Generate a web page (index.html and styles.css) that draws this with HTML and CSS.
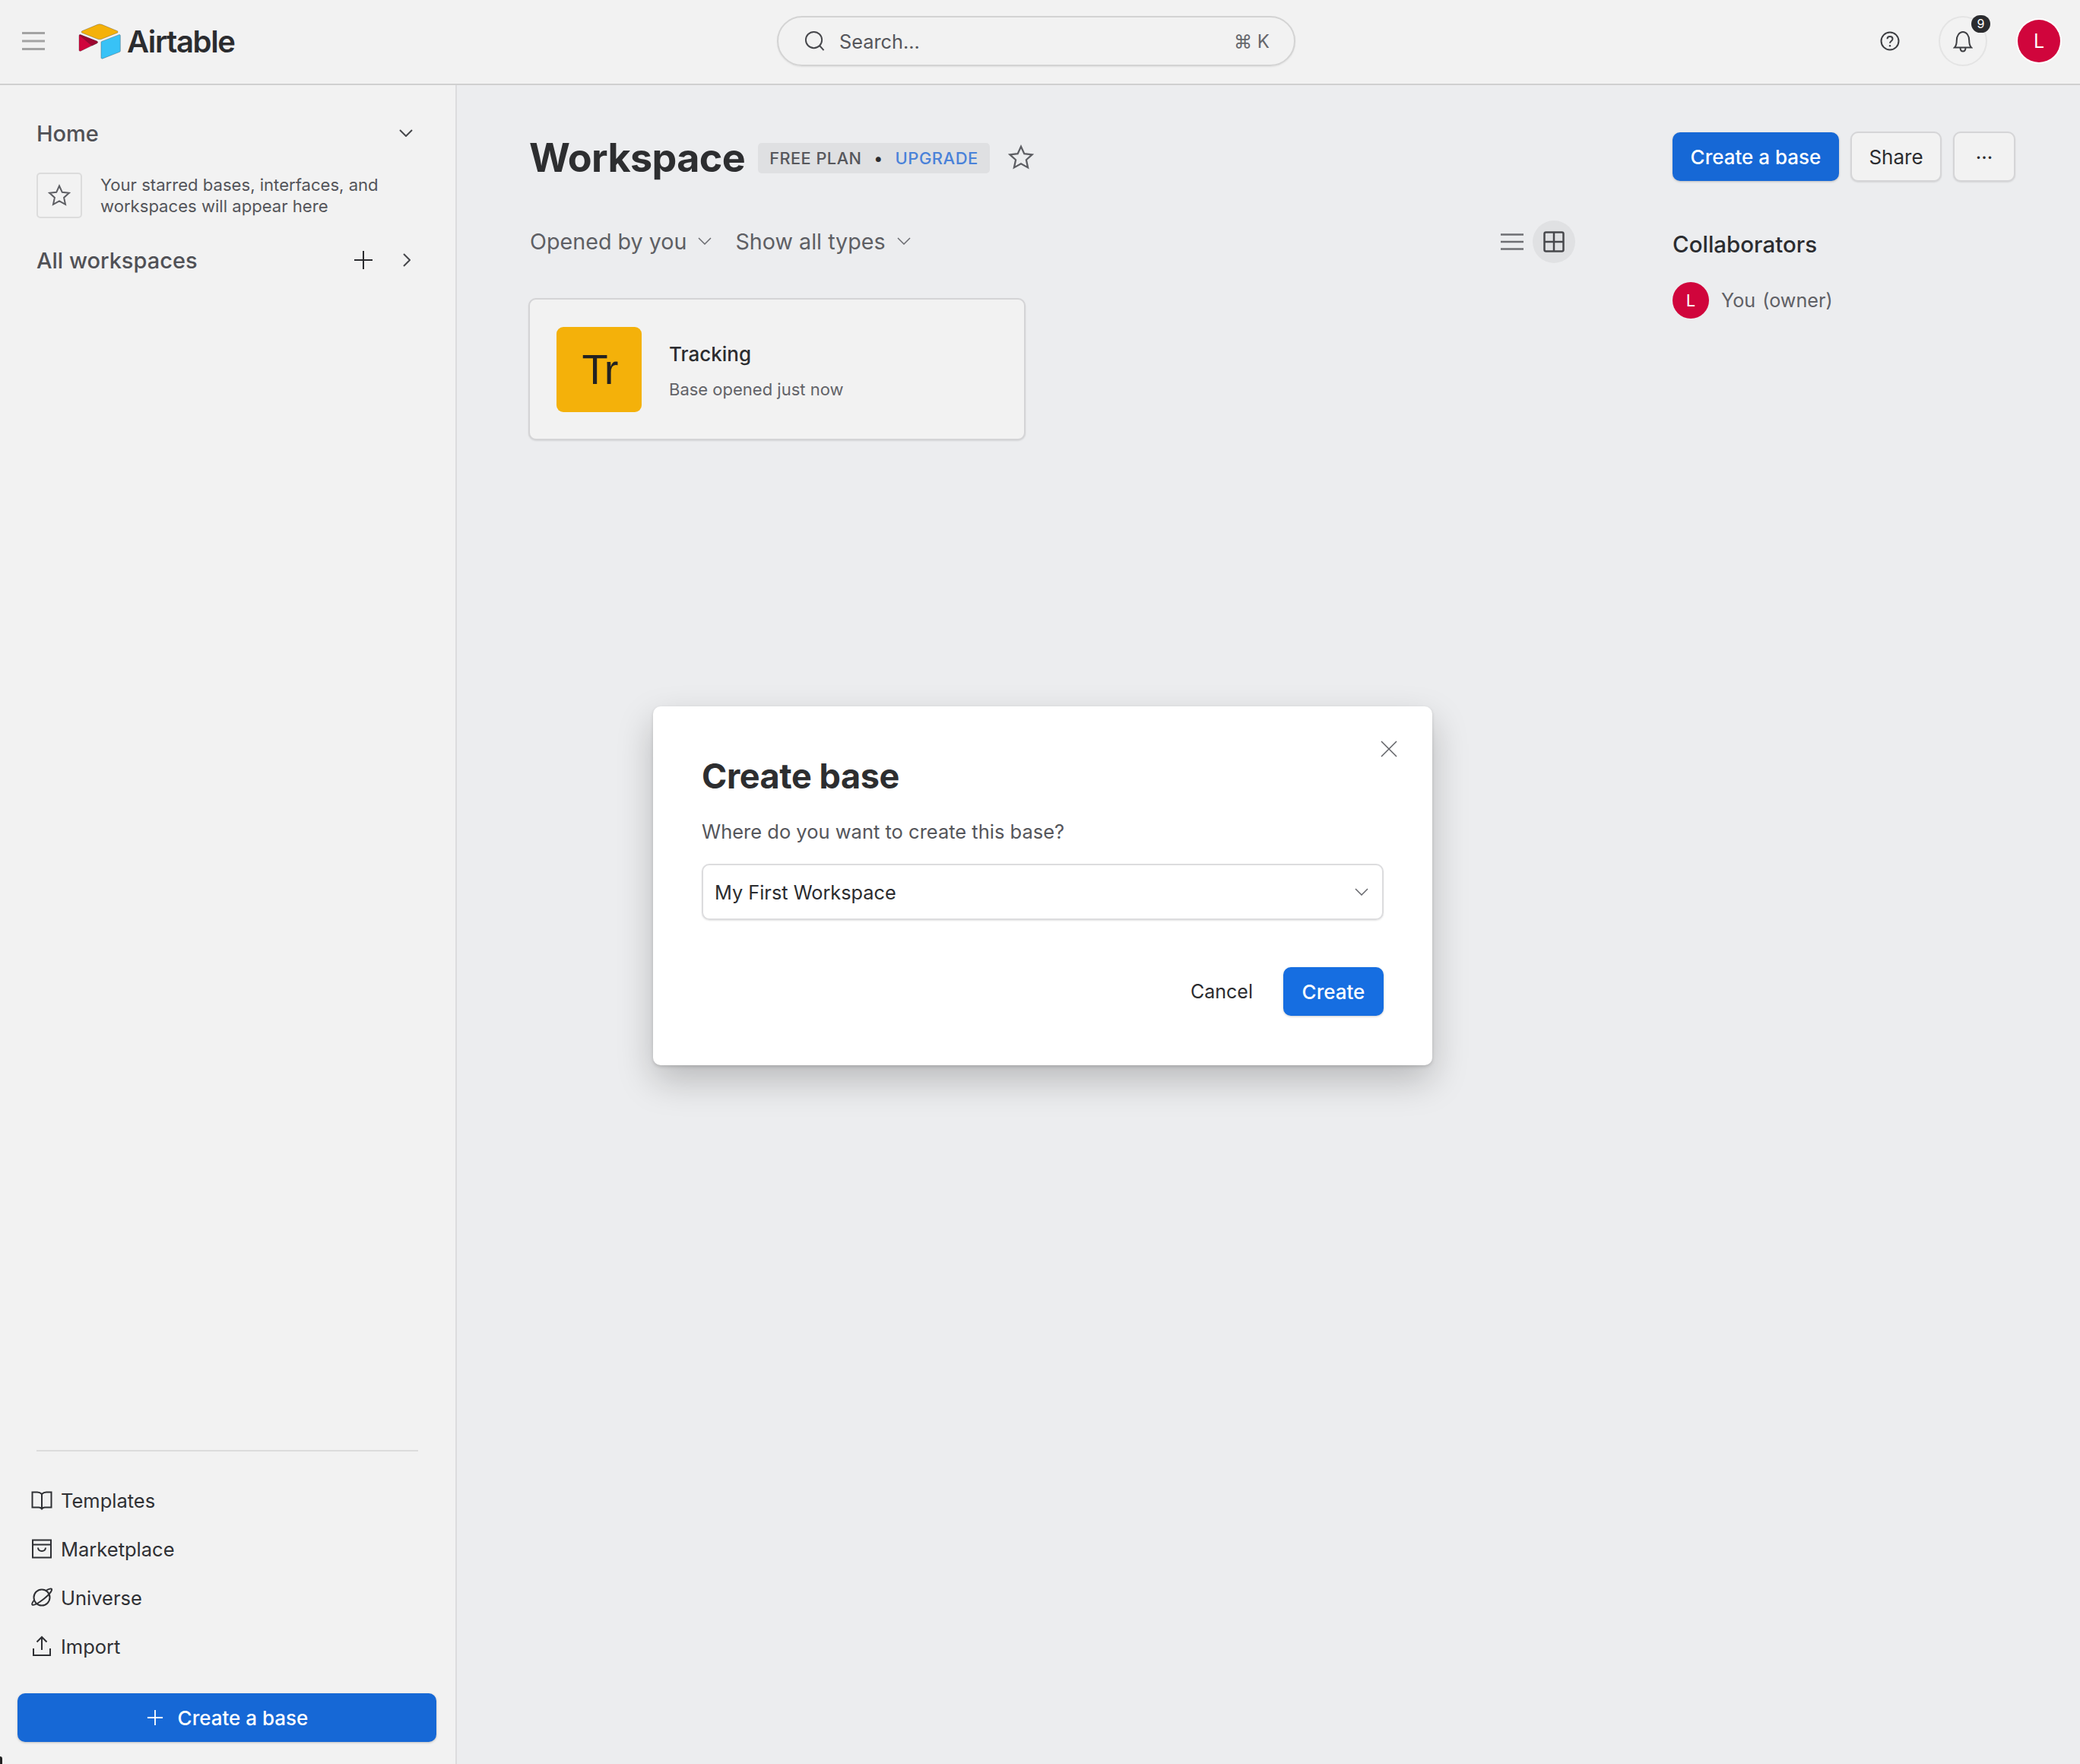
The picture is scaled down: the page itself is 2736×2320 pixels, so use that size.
FILE: index.html
```html
<!DOCTYPE html>
<html>
   <head>
      <title>Airtable - Workspace</title>
      <link rel="stylesheet" href="styles.css">
   </head>
   <body>

   <header class="topbar">
      <div class="brand">
         <svg class="burger" viewBox="0 0 30 26"><path d="M0 2.500h30M0 13h30M0 23.500h30"/></svg>
         <svg class="logo" viewBox="8 8 182 153">
            <path fill="#f4b10a" d="M90.04 12.37L24.08 39.66c-3.67 1.52-3.63 6.73.06 8.19l66.24 26.27c5.82 2.31 12.3 2.31 18.12 0l66.23-26.27c3.69-1.46 3.73-6.67.06-8.19l-65.96-27.29c-6.02-2.49-12.78-2.49-18.79 0"/>
            <path fill="#38c2f6" d="M105.31 88.46v65.62c0 3.12 3.15 5.26 6.05 4.11l73.81-28.65c1.68-.67 2.79-2.3 2.79-4.11V59.81c0-3.12-3.15-5.26-6.05-4.11l-73.81 28.65c-1.68.67-2.79 2.3-2.79 4.11"/>
            <path fill="#d0053c" d="M88.08 91.85l-21.9 10.57-2.23 1.08-46.24 22.15c-2.93 1.42-6.67-.72-6.67-3.98V60.09c0-1.18.6-2.2 1.41-2.96.34-.34.72-.62 1.12-.84 1.1-.66 2.68-.84 4.02-.31l70.12 27.78c3.56 1.41 3.84 6.41.37 8.09"/>
            <path fill="#9c0530" d="M88.08 91.85l-21.9 10.57-53.72-45.29c.34-.34.72-.62 1.12-.84 1.1-.66 2.68-.84 4.02-.31l70.12 27.78c3.56 1.41 3.84 6.41.37 8.09"/>
         </svg>
         <span class="wordmark">Airtable</span>
      </div>
      <div class="search">
         <svg class="ico-search" viewBox="0 0 28 28"><circle cx="13" cy="12.500" r="11"/><path d="M21 20.500l5.500 6"/></svg>
         <span class="search-text">Search...</span>
         <span class="search-key">⌘ K</span>
      </div>
      <div class="top-actions">
         <svg class="ico-help" viewBox="0 0 26 26"><circle cx="13" cy="13" r="11.500"/><path d="M9.500 10.300c0-2 1.500-3.300 3.500-3.300s3.500 1.300 3.500 3.200c0 2.900-3.500 2.700-3.500 5.600"/><circle class="dot" cx="13" cy="19.200" r="1.200"/></svg>
         <div class="bell-btn">
            <svg class="ico-bell" viewBox="0 0 26 30"><path d="M2 23.500c2-2 2.800-4 2.800-9.500 0-6 3.400-11 8.200-11s8.200 5 8.200 11c0 5.500.8 7.500 2.800 9.500zM9.500 23.500c0 3.500 1.500 5 3.500 5s3.500-1.500 3.500-5"/></svg>
            <span class="bell-count">9</span>
         </div>
         <div class="avatar">L</div>
      </div>
   </header>

   <div class="page">
      <aside class="sidebar">
         <div class="side-head home-head">
            <span>Home</span>
            <svg class="chev" viewBox="0 0 18 10"><path d="M1 1l8 8 8-8"/></svg>
         </div>
         <div class="starred">
            <div class="star-box"><svg class="ico-star" viewBox="0 0 30 30"><path d="M15 2.500l3.800 8.300 9 1-6.700 6.100 1.900 8.900-8-4.500-8 4.500 1.900-8.900-6.700-6.100 9-1z"/></svg></div>
            <p>Your starred bases, interfaces, and workspaces will appear here</p>
         </div>
         <div class="side-head all-head">
            <span>All workspaces</span>
            <svg class="side-plus" viewBox="0 0 24 24"><path d="M12 0v24M0 12h24"/></svg>
            <svg class="chev-right" viewBox="0 0 10 18"><path d="M1 1l8 8-8 8"/></svg>
         </div>

         <div class="side-foot">
            <nav class="side-links">
               <a class="side-link">
                  <svg viewBox="0 0 28 28"><path d="M14 6c-2-2-4-2.500-6-2.500H1.500v20H10c2 0 3 .5 4 2 1-1.500 2-2 4-2h8.500v-20H20c-2 0-4 .5-6 2.500zM14 6v20"/></svg>
                  Templates
               </a>
               <a class="side-link">
                  <svg viewBox="0 0 28 28"><path d="M2 2.500h24v23H2zM2 8.500h24M9 12.500c.5 6 9.500 6 10 0"/></svg>
                  Marketplace
               </a>
               <a class="side-link">
                  <svg viewBox="0 0 28 28"><circle cx="14" cy="14" r="10.500"/><path d="M20 4.500c3.500-2 6.500-2.500 7-1.500 1 2-4 8-10.500 13S3.500 25.500 1.500 23.500c-1-1 .5-3.500 2.500-6"/></svg>
                  Universe
               </a>
               <a class="side-link">
                  <svg viewBox="0 0 28 28"><path d="M14 19V2M7.500 8.500L14 2l6.500 6.500M3 17v9h22v-9"/></svg>
                  Import
               </a>
            </nav>
            <button class="btn btn-primary btn-wide">
               <svg class="btn-plus" viewBox="0 0 24 24"><path d="M12 1v22M1 12h22"/></svg>
               Create a base
            </button>
         </div>
      </aside>

      <main class="content">
         <div class="workspace">
            <div class="title-row">
               <h1>Workspace</h1>
               <div class="plan-badge">
                  <span>FREE PLAN</span>
                  <span class="plan-dot">•</span>
                  <a class="upgrade">UPGRADE</a>
               </div>
               <svg class="ico-star title-star" viewBox="0 0 30 30"><path d="M15 2.500l3.800 8.300 9 1-6.700 6.100 1.900 8.900-8-4.500-8 4.500 1.900-8.900-6.700-6.100 9-1z"/></svg>
            </div>
            <div class="filter-row">
               <span class="filter">Opened by you <svg class="chev" viewBox="0 0 18 10"><path d="M1 1l8 8 8-8"/></svg></span>
               <span class="filter">Show all types <svg class="chev" viewBox="0 0 18 10"><path d="M1 1l8 8 8-8"/></svg></span>
               <div class="view-switch">
                  <svg class="ico-list" viewBox="0 0 30 24"><path d="M0 2.500h30M0 12h30M0 21.500h30"/></svg>
                  <div class="grid-btn">
                     <svg class="ico-grid" viewBox="0 0 28 28"><rect x="1.500" y="1.500" width="25" height="25" rx="2"/><path d="M14 1.500v25M1.500 14h25"/></svg>
                  </div>
               </div>
            </div>
            <div class="base-card">
               <div class="base-tile">Tr</div>
               <div class="base-text">
                  <div class="base-name">Tracking</div>
                  <div class="base-meta">Base opened just now</div>
               </div>
            </div>
         </div>

         <div class="right-col">
            <div class="right-actions">
               <button class="btn btn-primary btn-create">Create a base</button>
               <button class="btn btn-plain btn-share">Share</button>
               <button class="btn btn-plain btn-more">···</button>
            </div>
            <h2>Collaborators</h2>
            <div class="collab">
               <div class="avatar avatar-small">L</div>
               <span>You (owner)</span>
            </div>
         </div>
      </main>
   </div>

   <div class="modal">
      <svg class="modal-close" viewBox="0 0 22 22"><path d="M1 1l20 20M21 1L1 21"/></svg>
      <h3>Create base</h3>
      <p>Where do you want to create this base?</p>
      <div class="select">
         <span>My First Workspace</span>
         <svg class="chev" viewBox="0 0 18 10"><path d="M1 1l8 8 8-8"/></svg>
      </div>
      <div class="modal-actions">
         <span class="cancel">Cancel</span>
         <button class="btn btn-modal">Create</button>
      </div>
   </div>

   </body>
</html>
```

FILE: styles.css
```css
* { box-sizing: border-box; }
html, body { height: 100%; }
body { margin: 0; background: #ecedef; color: #2b2c2f; font-family: Inter, "Liberation Sans", sans-serif;
       display: flex; flex-direction: column; overflow: hidden; }
/* dark sliver of the window corner, bottom left */
body::after { content: ""; position: absolute; left: 0; bottom: 0; width: 3px; height: 10px; background: #222; border-top-right-radius: 3px; }
svg { display: block; fill: none; stroke: currentColor; flex: none; }
h1, h2, h3, p { margin: 0; }

/* top bar */
.topbar { height: 112px; flex: none; background: #f2f2f2; border-bottom: 2px solid #d0d0d0;
          display: flex; align-items: center; position: relative; padding: 0 0 2px 29px; }
.brand { display: flex; align-items: center; width: 993px; }
.burger { width: 30px; height: 26px; color: #a3a3a3; stroke-width: 3; margin-right: 44px; }
.logo { width: 56px; height: 47px; margin-right: 8px; }
.wordmark { font-size: 40px; font-weight: 600; letter-spacing: -1.4px; color: #2b2c2f; }
.search { width: 682px; height: 66px; border: 2px solid #d3d3d3; border-radius: 33px; display: flex; align-items: center;
          padding: 0 32px 0 34px; box-shadow: 0 1px 2px rgba(0,0,0,.08); }
.ico-search { width: 27px; height: 28px; stroke-width: 2; color: #46474b; margin-right: 19px; }
.search-text { font-size: 25.300px; color: #55565b; flex: 1; }
.search-key { font-size: 24px; color: #66676c; }
.top-actions { margin-left: auto; display: flex; align-items: center; padding-right: 26px; }
.ico-help { width: 26px; height: 26px; stroke-width: 2; color: #3d3e42; margin-right: 51px; }
.ico-help .dot { fill: #3d3e42; stroke: none; }
.bell-btn { position: relative; width: 64px; height: 66px; border: 2px solid #e4e4e4; border-radius: 50%; margin-right: 40px;
            display: flex; align-items: center; justify-content: center; }
.ico-bell { width: 26px; height: 30px; stroke-width: 2; color: #3d3e42; }
.bell-count { position: absolute; top: -3px; right: -6px; width: 25px; height: 23px; border-radius: 12px; background: #2b2c2f;
              color: #fff; font-size: 16px; line-height: 23px; text-align: center; }
.avatar { width: 56px; height: 56px; border-radius: 50%; background: #d0053c; color: #fff; font-size: 25px; box-shadow: 0 0 0 2px #fff;
          display: flex; align-items: center; justify-content: center; }

/* layout below the bar */
.page { flex: 1; display: flex; min-height: 0; }
.sidebar { width: 601px; flex: none; background: #f2f2f2; border-right: 2px solid #dcdcde; padding: 44px 0 29px 0; display: flex; flex-direction: column; }

.side-head { display: flex; align-items: center; padding: 0 59px 0 48px; font-size: 29px; font-weight: 500; color: #505156; }
.side-head span { flex: 1; }
.chev { width: 18px; height: 10px; stroke-width: 2; color: #46474b; }
.home-head { height: 38px; padding-right: 56px; }
.starred { display: flex; align-items: center; padding: 0 48px; margin-top: 33px; gap: 24px; }
.star-box { width: 60px; height: 60px; border: 2px solid #dcdcdc; border-radius: 5px; display: flex; align-items: center; justify-content: center; flex: none; }
.ico-star { width: 30px; height: 30px; stroke-width: 2; color: #5d5e63; }
.starred p { font-size: 22.100px; line-height: 28px; color: #54555a; width: 400px; }
.all-head { margin-top: 36px; height: 38px; }
.side-plus { width: 24px; height: 24px; stroke-width: 2; color: #2b2c2f; margin-right: 40px; }
.chev-right { width: 10px; height: 18px; stroke-width: 2; color: #46474b; }

.side-foot { margin-top: auto; }
.side-links { display: flex; flex-direction: column; gap: 22px; padding: 45px 0 0 41px; position: relative; }
.side-links::before { content: ""; position: absolute; top: 0; left: 48px; width: 502px; height: 2px; background: #dcdcdc; }
.side-link { display: flex; align-items: center; gap: 11px; height: 42px; font-size: 25.500px; color: #2f3034; }
.side-link svg { width: 28px; height: 28px; stroke-width: 2; color: #2f3034; }
.btn { border: 0; font-family: inherit; font-size: 26px; font-weight: 500; display: flex; align-items: center; justify-content: center; }
.btn-primary { background: #1668d6; color: #fff; border-radius: 10px; box-shadow: 0 1px 3px rgba(0,0,0,.22); }
.btn-wide { margin: 41px 0 0 23px; width: 551px; height: 64px; gap: 19px; padding-left: 7px; }
.btn-plus { width: 22px; height: 22px; stroke-width: 2; color: #fff; }

/* main column */
.content { flex: 1; display: flex; padding: 62px 0 0 94px; }
.workspace { width: 1377px; flex: none; }
.title-row { display: flex; align-items: center; height: 66px; }
h1 { font-size: 52px; font-weight: 700; letter-spacing: -.6px; color: #2d2e30; margin-right: 17px; margin-left: 1px; }
.plan-badge { height: 40px; padding: 0 15px; background: #dfe0e2; border-radius: 5px; display: flex; align-items: center;
              font-size: 21.700px; font-weight: 500; letter-spacing: .5px; color: #56575c; margin: 2px 24px 0 0; }
.plan-dot { margin: 0 16px; color: #2d2e30; }
.upgrade { color: #4a82d9; font-size: 22px; }
.title-star { width: 34px; height: 34px; }
.filter-row { display: flex; align-items: center; margin-top: 49px; height: 56px; padding-left: 2px; }
.filter { display: flex; align-items: center; gap: 15px; font-size: 28.700px; color: #5e5f64; margin-right: 31px; }
.filter .chev { color: #6a6b70; stroke-width: 1.500; }
.view-switch { margin-left: auto; display: flex; align-items: center; gap: 12px; margin-top: 1px; }
.ico-list { width: 30px; height: 24px; stroke-width: 2.500; color: #6e6f73; }
.grid-btn { width: 56px; height: 56px; border-radius: 50%; background: #e0e1e3; display: flex; align-items: center; justify-content: center; }
.ico-grid { width: 28px; height: 28px; stroke-width: 2.500; color: #47484c; }

.base-card { width: 654px; height: 187px; margin-top: 47px; background: #f2f2f2; border-radius: 10px; border: 2px solid #d4d4d6;
             box-shadow: 0 1px 2px rgba(0,0,0,.1); padding: 0 35px; display: flex; align-items: center; gap: 36px; }
.base-tile { width: 112px; height: 112px; border-radius: 9px; background: #f4b10a; color: #222;
             font-family: "Liberation Sans", sans-serif; font-size: 56px; letter-spacing: -3px;
             display: flex; align-items: center; justify-content: center; }
.base-text { padding-top: 4px; }
.base-name { font-size: 26px; font-weight: 500; color: #2b2c2f; }
.base-meta { font-size: 22px; color: #626368; margin-top: 18px; }

.right-col { flex: 1; margin-left: 128px; }
.right-actions { display: flex; align-items: flex-start; gap: 15px; }
.btn-create { width: 219px; height: 64px; }
.btn-plain { background: #f2f2f2; color: #2b2c2f; border: 2px solid #d5d5d7; border-radius: 10px; height: 66px; font-weight: 400; box-shadow: 0 1px 2px rgba(0,0,0,.1); margin-top: -1px; }
.btn-share { width: 120px; }
.btn-more { width: 82px; }
h2 { font-size: 29.500px; font-weight: 500; color: #2b2c2f; margin-top: 64px; }
.collab { display: flex; align-items: center; gap: 16px; margin-top: 32px; font-size: 25.200px; color: #5f6065; word-spacing: 2px; }
.avatar-small { width: 48px; height: 48px; font-size: 22px; box-shadow: none; }

/* dialog */
.modal { position: absolute; left: 859px; top: 929px; width: 1025px; height: 472px; background: #fff; border-radius: 10px;
         box-shadow: 0 20px 48px rgba(0,0,0,.22), 0 2px 4px rgba(0,0,0,.15); padding: 62px 64px 0 64px; }
.modal-close { position: absolute; top: 45px; right: 46px; width: 22px; height: 22px; stroke-width: 1.500; color: #5f6065; }
h3 { font-size: 45px; font-weight: 700; letter-spacing: -.4px; color: #2d2e30; line-height: 60px; }
.modal p { font-size: 25.500px; color: #55565b; margin-top: 27px; line-height: 32px; }
.select { height: 74px; margin-top: 26px; border: 2px solid #dcdcde; border-radius: 10px; box-shadow: 0 1px 2px rgba(0,0,0,.1);
          display: flex; align-items: center; justify-content: space-between; padding: 0 18px 0 15px; font-size: 25.300px; color: #2b2c2f; }
.select .chev { color: #66676c; stroke-width: 1.500; }
.modal-actions { display: flex; align-items: center; justify-content: flex-end; gap: 40px; margin-top: 62px; }
.cancel { font-size: 25px; color: #2b2c2f; }
.btn-modal { width: 132px; height: 64px; background: #166ee1; color: #fff; border-radius: 10px; box-shadow: 0 1px 3px rgba(0,0,0,.2); }
```
